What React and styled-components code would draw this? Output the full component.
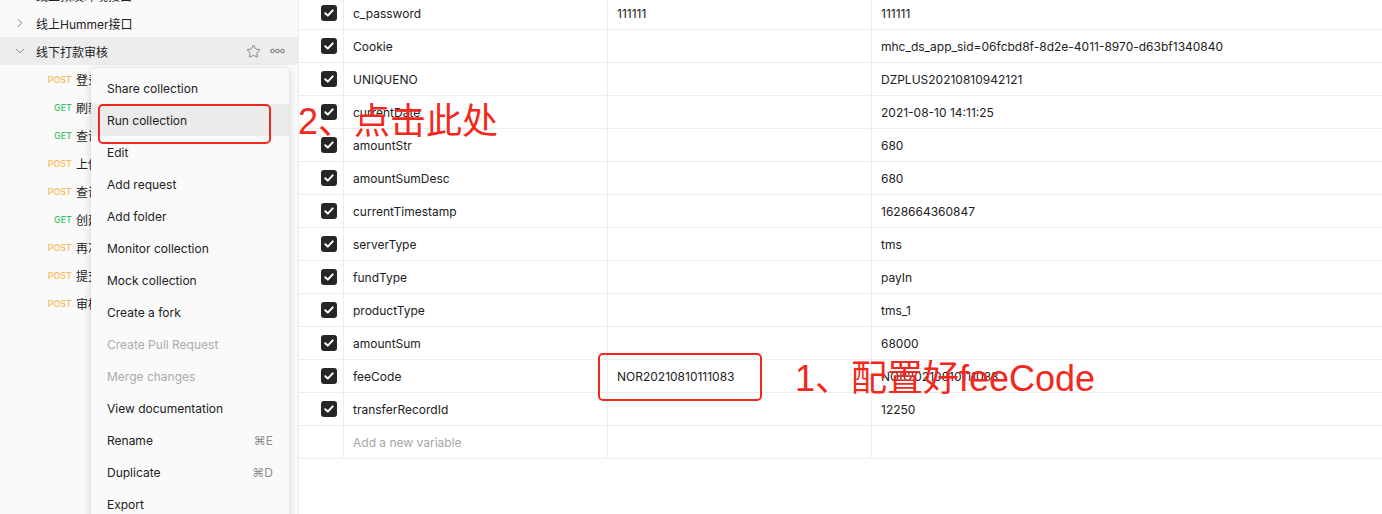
import React from 'react';
import styled, { createGlobalStyle } from 'styled-components';
import { ChevronRight, ChevronDown, Star } from 'lucide-react';

const GlobalStyle = createGlobalStyle`
  html, body {
    margin: 0;
    padding: 0;
    background: #fff;
    font-family: Inter, "Noto Sans CJK SC", sans-serif;
    -webkit-font-smoothing: antialiased;
  }
`;

const folders = [
  { name: '线上预发环境接口', open: false },
  { name: '线上Hummer接口', open: false },
  { name: '线下打款审核', open: true, active: true },
];

const requests = [
  { method: 'POST', name: '登录接口' },
  { method: 'GET', name: '刷新token' },
  { method: 'GET', name: '查询列表' },
  { method: 'POST', name: '上传凭证' },
  { method: 'POST', name: '查询详情' },
  { method: 'GET', name: '创建打款单' },
  { method: 'POST', name: '再次提交' },
  { method: 'POST', name: '提交审核' },
  { method: 'POST', name: '审核通过' },
];

const menuItems = [
  { label: 'Share collection' },
  { label: 'Run collection', hover: true },
  { label: 'Edit' },
  { label: 'Add request' },
  { label: 'Add folder' },
  { label: 'Monitor collection' },
  { label: 'Mock collection' },
  { label: 'Create a fork' },
  { label: 'Create Pull Request', disabled: true },
  { label: 'Merge changes', disabled: true },
  { label: 'View documentation' },
  { label: 'Rename', shortcut: '⌘E' },
  { label: 'Duplicate', shortcut: '⌘D' },
  { label: 'Export' },
];

const variables = [
  { key: 'c_password', initial: '111111', current: '111111' },
  { key: 'Cookie', initial: '', current: 'mhc_ds_app_sid=06fcbd8f-8d2e-4011-8970-d63bf1340840' },
  { key: 'UNIQUENO', initial: '', current: 'DZPLUS20210810942121' },
  { key: 'currentDate', initial: '', current: '2021-08-10 14:11:25' },
  { key: 'amountStr', initial: '', current: '680' },
  { key: 'amountSumDesc', initial: '', current: '680' },
  { key: 'currentTimestamp', initial: '', current: '1628664360847' },
  { key: 'serverType', initial: '', current: 'tms' },
  { key: 'fundType', initial: '', current: 'payIn' },
  { key: 'productType', initial: '', current: 'tms_1' },
  { key: 'amountSum', initial: '', current: '68000' },
  { key: 'feeCode', initial: 'NOR20210810111083', current: 'NOR20210810111083' },
  { key: 'transferRecordId', initial: '', current: '12250' },
];

const Dots = () => (
  <svg width="15" height="6" viewBox="0 0 15 6" fill="none" stroke="#6b6b6b" strokeWidth="1">
    <circle cx="2.5" cy="3" r="1.8" />
    <circle cx="7.5" cy="3" r="1.8" />
    <circle cx="12.5" cy="3" r="1.8" />
  </svg>
);

const Check = () => (
  <svg width="10" height="8" viewBox="0 0 10 8" fill="none" stroke="#fff" strokeWidth="2" strokeLinecap="round" strokeLinejoin="round">
    <path d="M1.3 4.2 L3.8 6.6 L8.7 1.4" />
  </svg>
);

const App = () => {
  return (
    <>
      <GlobalStyle />
      <Page>
        <Sidebar>
          <Tree>
            {folders.map(f => (
              <FolderRow key={f.name} active={f.active}>
                <Chevron>
                  {f.open ? <ChevronDown size={14} strokeWidth={1.5} /> : <ChevronRight size={14} strokeWidth={1.5} />}
                </Chevron>
                <FolderName>{f.name}</FolderName>
                {f.active && (
                  <RowActions>
                    <Star size={15} strokeWidth={1.3} color="#6b6b6b" />
                    <Dots />
                  </RowActions>
                )}
              </FolderRow>
            ))}
            {requests.map((r, i) => (
              <RequestRow key={i}>
                <Method method={r.method}>{r.method}</Method>
                <RequestName>{r.name}</RequestName>
              </RequestRow>
            ))}
          </Tree>

          <Menu>
            {menuItems.map(m => (
              <MenuItem key={m.label} hover={m.hover} disabled={m.disabled}>
                <span>{m.label}</span>
                {m.shortcut && <Shortcut>{m.shortcut}</Shortcut>}
              </MenuItem>
            ))}
          </Menu>
        </Sidebar>

        <Main>
          <Table>
            {variables.map(v => (
              <Row key={v.key}>
                <CheckCell>
                  <Box>
                    <Check />
                  </Box>
                </CheckCell>
                <Cell>{v.key}</Cell>
                <Cell>{v.initial}</Cell>
                <Cell>{v.current}</Cell>
              </Row>
            ))}
            <Row>
              <CheckCell />
              <Cell placeholder>Add a new variable</Cell>
              <Cell />
              <Cell />
            </Row>
          </Table>
        </Main>

        <Highlight style={{ left: 98, top: 104, width: 173, height: 40 }} />
        <Highlight style={{ left: 598, top: 353, width: 164, height: 48 }} />
        <Note style={{ left: 298, top: 100 }}>2、点击此处</Note>
        <Note style={{ left: 795, top: 357 }}>1、配置好feeCode</Note>
      </Page>
    </>
  );
};

const Page = styled.div`
  position: relative;
  display: flex;
  width: 1382px;
  height: 514px;
  overflow: hidden;
  background: #fff;
  color: #212121;
`;

const Sidebar = styled.aside`
  position: relative;
  flex: 0 0 298px;
  background: #fafafa;
  border-right: 1px solid #ededed;
`;

const Tree = styled.div`
  display: flex;
  flex-direction: column;
  margin-top: -20px;
  padding-top: 1px;
`;

const FolderRow = styled.div`
  display: flex;
  align-items: center;
  height: 28px;
  padding: 0 13px 0 13px;
  background: ${p => (p.active ? '#ededed' : 'transparent')};
`;

const Chevron = styled.span`
  display: flex;
  width: 14px;
  margin-right: 9px;
  color: #6b6b6b;
`;

const FolderName = styled.span`
  flex: 1;
  font-size: 12px;
  color: #212121;
  white-space: nowrap;
`;

const RowActions = styled.span`
  display: flex;
  align-items: center;
  gap: 9px;
`;

const RequestRow = styled.div`
  display: flex;
  align-items: center;
  height: 28px;
`;

const Method = styled.span`
  width: 72px;
  text-align: right;
  font-size: 9px;
  font-weight: 500;
  color: ${p => (p.method === 'GET' ? '#3fc267' : '#f7bb52')};
`;

const RequestName = styled.span`
  margin-left: 4px;
  font-size: 12px;
  color: #212121;
  white-space: nowrap;
`;

const Menu = styled.div`
  position: absolute;
  left: 91px;
  top: 68px;
  width: 198px;
  padding: 4px 0;
  background: #fafafa;
  border-radius: 4px;
  box-shadow: 0 2px 8px rgba(0, 0, 0, 0.16), 0 0 1px rgba(0, 0, 0, 0.12);
  z-index: 2;
`;

const MenuItem = styled.div`
  display: flex;
  align-items: center;
  justify-content: space-between;
  height: 32px;
  padding: 0 16px;
  font-size: 12px;
  background: ${p => (p.hover ? '#ebebeb' : 'transparent')};
  color: ${p => (p.disabled ? '#ababab' : '#212121')};
`;

const Shortcut = styled.span`
  color: #8c8c8c;
  font-size: 12px;
`;

const Main = styled.main`
  flex: 1;
  min-width: 0;
`;

const Table = styled.div`
  margin-top: -3px;
`;

const Row = styled.div`
  display: grid;
  grid-template-columns: 45px 264px 264px minmax(0, 1fr);
  height: 33px;
  border-bottom: 1px solid #ededed;
  box-sizing: border-box;
`;

const CheckCell = styled.div`
  display: flex;
  align-items: center;
  justify-content: flex-end;
  padding-right: 6px;
  border-right: 1px solid #ededed;
`;

const Box = styled.span`
  display: flex;
  align-items: center;
  justify-content: center;
  width: 16px;
  height: 16px;
  border-radius: 3px;
  background: #262626;
`;

const Cell = styled.div`
  display: flex;
  align-items: center;
  min-width: 0;
  padding-left: 9px;
  font-size: 12px;
  white-space: nowrap;
  overflow: hidden;
  color: ${p => (p.placeholder ? '#a6a6a6' : '#212121')};
  border-right: 1px solid #ededed;

  &:last-child {
    border-right: none;
  }
`;

const Highlight = styled.div`
  position: absolute;
  box-sizing: border-box;
  border: 2px solid #f3271c;
  border-radius: 5px;
  z-index: 3;
`;

const Note = styled.div`
  position: absolute;
  font-family: "Liberation Sans", "Noto Sans CJK SC", sans-serif;
  font-size: 36px;
  line-height: 44px;
  color: #f3271c;
  white-space: nowrap;
  z-index: 3;
`;

export default App;
